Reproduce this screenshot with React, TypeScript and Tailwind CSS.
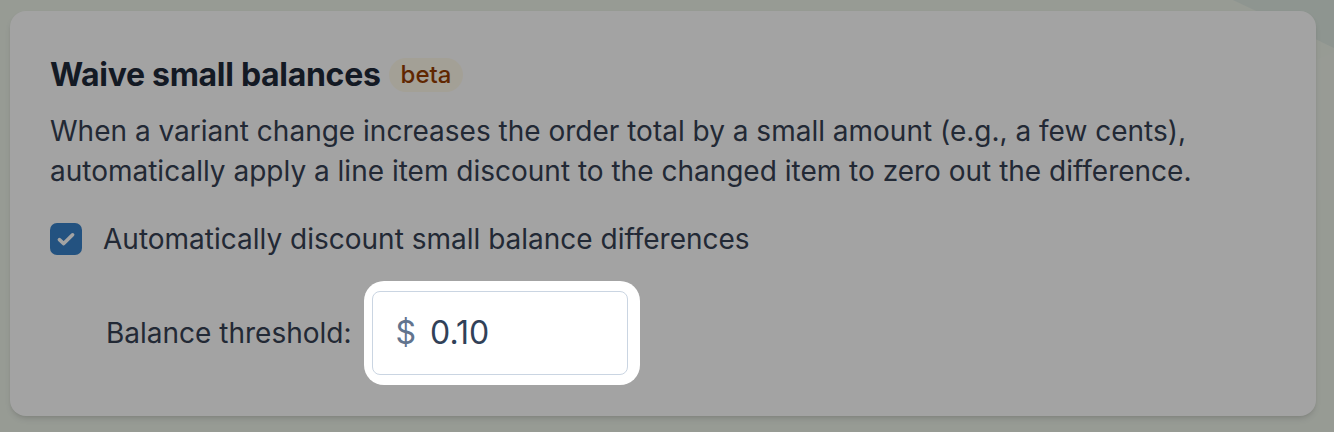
import React from 'react'

// Onboarding tour step: the threshold input is spotlighted above a dim overlay
function CheckIcon({ className }: { className?: string }) {
  return (
    <svg className={className} viewBox="0 0 20 20" fill="none" stroke="currentColor">
      <path strokeLinecap="round" strokeLinejoin="round" strokeWidth={3} d="M4.5 10.5l3.6 3.3L15.5 6.5" />
    </svg>
  )
}

export default function App() {
  return (
    <div
      className="relative w-[1334px] h-[432px] overflow-hidden bg-[#ecf2e8] pt-[11px] pl-[10px]"
      style={{ fontFamily: 'Inter, "Noto Sans", sans-serif' }}
    >
      {/* background decoration in the top right corner */}
      <svg className="absolute inset-0" width="1334" height="432" viewBox="0 0 1334 432">
        <polygon points="1233,0 1334,0 1334,48" fill="#dee9e1" />
        <polygon points="1316,60 1334,52 1334,200 1316,200" fill="#eef3ea" />
      </svg>

      <div className="relative w-[1306px] h-[405px] rounded-2xl bg-white shadow-md px-10 pt-10">
        <div className="flex items-center h-12">
          <h2 className="text-[32px] leading-[48px] font-bold text-gray-800 tracking-[-0.3px]">
            Waive small balances
          </h2>
          <span className="ml-2 rounded-full bg-amber-50 px-3 h-[34px] flex items-center text-[24px] font-medium text-amber-800">
            beta
          </span>
        </div>

        <p className="mt-3 text-[28px] leading-10 text-gray-700">
          When a variant change increases the order total by a small amount (e.g., a few cents),
          <br />
          automatically apply a line item discount to the changed item to zero out the difference.
        </p>

        <label className="mt-7 flex items-center h-10">
          <span className="w-8 h-8 rounded-[7px] bg-[#3780c8] flex items-center justify-center">
            <CheckIcon className="w-6 h-6 text-white" />
          </span>
          <span className="ml-[21px] text-[28px] leading-10 text-gray-700">
            Automatically discount small balance differences
          </span>
        </label>

        <div className="mt-[22px] flex items-center pl-14">
          <span className="text-[28px] leading-10 text-gray-700">Balance threshold:</span>
          <div className="relative z-20 ml-[12px] bg-white rounded-[20px] pl-2 pr-3 pt-[10px] pb-[10px]">
            <div className="w-[256px] h-[84px] rounded-lg border-[1.5px] border-slate-300 flex items-center pl-[23px] text-[32px]">
              <span className="text-slate-500">$</span>
              <span className="ml-[14px] text-slate-700">0.10</span>
            </div>
          </div>
        </div>
      </div>

      {/* dim overlay */}
      <div className="absolute inset-0 z-10 bg-black/[0.36]" />
    </div>
  )
}
